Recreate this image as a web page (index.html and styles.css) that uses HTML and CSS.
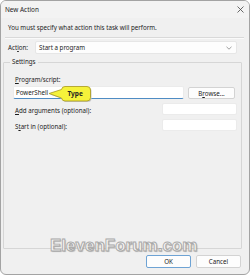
FILE: index.html
```html
<!DOCTYPE html>
<html>
<head>
<meta charset="utf-8">
<link rel="stylesheet" href="styles.css">
</head>
<body>
<div class="window">
  <div class="titlebar">
    <span class="title">New Action</span>
    <svg class="close" width="7" height="7" viewBox="0 0 7 7"><path d="M0.5 0.5 L6.5 6.5 M6.5 0.5 L0.5 6.5" stroke="#444" stroke-width="0.8" fill="none"/></svg>
  </div>
  <div class="intro">You must specify what action this task will perform.</div>
  <div class="divider"></div>
  <div class="action-row">
    <span class="action-label">Act<u>i</u>on:</span>
    <div class="select">
      <span>Start a program</span>
      <svg width="6" height="4" viewBox="0 0 6 4"><path d="M0.5 0.8 L3 3.2 L5.5 0.8" stroke="#777" stroke-width="0.7" fill="none"/></svg>
    </div>
  </div>
  <fieldset class="group">
    <legend class="legend">Settings</legend>
    <div class="label first"><u>P</u>rogram/script:</div>
    <div class="program-row">
      <div class="input focused">
        <span class="value">PowerShell</span>
        <svg class="callout" width="46" height="20" viewBox="0 0 46 20">
          <path d="M2 9.5 L14.5 5.5 Q15 2.5 18 2.5 L40 2.5 Q43.5 2.5 43.5 6 L43.5 13.5 Q43.5 17 40 17 L18 17 Q15 17 14.5 14 Z" fill="#c8c8c8" transform="translate(1 1)"/>
          <path d="M2 9.5 L14.5 5.5 Q15 2.5 18 2.5 L40 2.5 Q43.5 2.5 43.5 6 L43.5 13.5 Q43.5 17 40 17 L18 17 Q15 17 14.5 14 Z" fill="#f5f23a" stroke="#a8981c" stroke-width="0.8"/>
          <text x="20.5" y="12" class="callout-text">Type</text>
        </svg>
      </div>
      <div class="button browse">B<u>r</u>owse...</div>
    </div>
    <div class="field-row args">
      <span class="label"><u>A</u>dd arguments (optional):</span>
      <div class="input small"></div>
    </div>
    <div class="field-row start">
      <span class="label">S<u>t</u>art in (optional):</span>
      <div class="input small"></div>
    </div>
  </fieldset>
  <div class="buttons">
    <div class="button ok">OK</div>
    <div class="button">Cancel</div>
  </div>
  <div class="watermark">ElevenForum.com</div>
</div>
</body>
</html>
```

FILE: styles.css
```css
html, body {
  margin: 0;
  padding: 0;
  background: #ffffff;
}
body {
  font-family: "Noto Sans", "Open Sans", sans-serif;
  font-size: 6.2px;
  color: #1b1b1b;
}
.window {
  position: relative;
  box-sizing: border-box;
  width: 250px;
  height: 275px;
  border: 1px solid #a3a3a3;
  border-radius: 6px;
  background: #f0f0f0;
  display: flex;
  flex-direction: column;
  overflow: hidden;
}
.titlebar {
  height: 17px;
  display: flex;
  align-items: center;
  justify-content: space-between;
  padding: 0 5px 0 4px;
  background: #f3f3f3;
}
.title {
  font-size: 6.4px;
  color: #222;
}
.close {
  display: block;
}
.intro {
  margin-top: 5px;
  line-height: 10px;
  height: 10px;
  padding-left: 7px;
}
.divider {
  margin: 4px 5px 0 4px;
  height: 0;
  border-top: 1px solid #d9d9d9;
  border-bottom: 1px solid #fafafa;
}
.action-row {
  margin-top: 2px;
  height: 13px;
  display: flex;
  align-items: center;
  padding-left: 7px;
}
.action-label {
  width: 27px;
}
.select {
  box-sizing: border-box;
  width: 202px;
  height: 13px;
  background: #fdfdfd;
  border: 1px solid #e6e6e6;
  border-radius: 2px;
  display: flex;
  align-items: center;
  justify-content: space-between;
  padding: 0 4px 0 3px;
}
.select svg {
  display: block;
}
u {
  text-decoration-thickness: 0.5px;
  text-underline-offset: 1px;
}
.group {
  margin: 4px 0 0 2px;
  width: 239px;
  box-sizing: border-box;
  flex: 1;
  min-width: 0;
  padding: 0 4px 0 9px;
  border: 1px solid #d6d6d6;
  border-radius: 1px;
}
.legend {
  line-height: 8px;
  padding: 0 2px;
  margin-left: -3px;
}
.label {
  line-height: 8px;
  padding-left: 2px;
}
.label.first {
  margin-top: 10px;
}
.program-row {
  margin-top: 2px;
  display: flex;
  align-items: flex-start;
  gap: 4px;
}
.input {
  position: relative;
  box-sizing: border-box;
  height: 13px;
  background: #ffffff;
  border: 1px solid #ebebeb;
  border-radius: 2px;
  display: flex;
  align-items: center;
}
.input.focused {
  width: 171px;
  border-bottom: 1px solid #4f8cc4;
  padding-left: 2px;
}
.input.small {
  width: 75px;
  height: 12px;
}
.callout {
  position: absolute;
  left: 33px;
  top: -3px;
}
.callout-text {
  font-family: "Noto Sans", sans-serif;
  font-size: 6.5px;
  font-weight: bold;
  fill: #222;
}
.button {
  box-sizing: border-box;
  height: 13px;
  background: #fdfdfd;
  border: 1px solid #d3d3d3;
  border-radius: 2px;
  display: flex;
  align-items: center;
  justify-content: center;
}
.browse {
  margin-top: 1px;
  width: 47px;
  height: 12px;
}
.field-row {
  display: flex;
  align-items: center;
  justify-content: space-between;
}
.field-row .label {
  padding-top: 3px;
}
.args {
  margin-top: 4px;
}
.start {
  margin-top: 4px;
}
.buttons {
  margin: 6px 8px 6px 0;
  display: flex;
  justify-content: flex-end;
  gap: 5px;
}
.buttons .button {
  width: 45px;
}
.ok {
  border-color: #6ea3d4;
}
.watermark {
  position: absolute;
  left: 49px;
  top: 236px;
  font-family: "Liberation Sans", Arial, sans-serif;
  font-weight: bold;
  font-size: 17px;
  line-height: 17px;
  color: #f6f6f6;
  -webkit-text-stroke: 0.9px #a9a9a9;
  text-shadow: 1px 1px 1px rgba(0, 0, 0, 0.25);
  letter-spacing: 0;
}
```
